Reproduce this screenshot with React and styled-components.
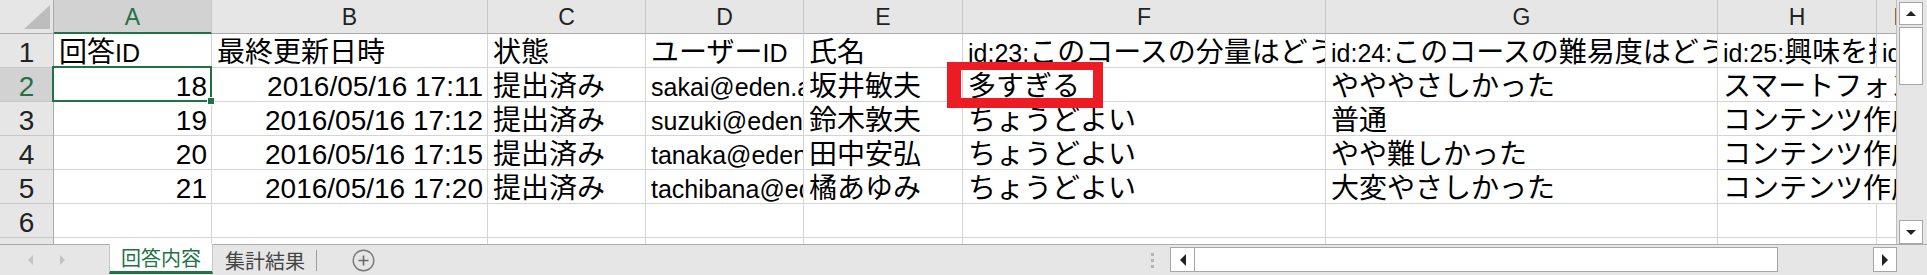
import React from "react";
import styled, { createGlobalStyle, css } from "styled-components";

const GlobalStyle = createGlobalStyle`
  html, body {
    margin: 0;
    padding: 0;
    background: #e6e6e6;
    overflow: hidden;
  }
  body {
    font-family: "Liberation Sans", "Noto Sans CJK JP", sans-serif;
  }
`;

const Window = styled.div`
  width: 1927px;
  height: 275px;
  display: flex;
  flex-direction: column;
  background: #e6e6e6;
`;

const Body = styled.div`
  display: flex;
  height: 244px;
`;

const Sheet = styled.div`
  width: 1897px;
  height: 244px;
  box-sizing: border-box;
  border-right: 1px solid #bcbcbc;
  overflow: hidden;
  background: #fff;
  display: grid;
  grid-template-columns: 54px 158px 276px 158px 158px 159px 363px 392px 159px 40px;
  grid-template-rows: 34px repeat(7, 34px);
  align-content: start;
`;

/* header cells */
const Corner = styled.div`
  position: relative;
  box-sizing: border-box;
  background: #e6e6e6;
  border-right: 1px solid #ababab;
  border-bottom: 1px solid #ababab;

  &::after {
    content: "";
    position: absolute;
    right: 3px;
    bottom: 4px;
    width: 0;
    height: 0;
    border-left: 26px solid transparent;
    border-bottom: 24px solid #bdbdbd;
  }
`;

const ColHead = styled.div`
  box-sizing: border-box;
  padding-top: 3px;
  background: ${(p) => (p.$selected ? "#d2d2d2" : "#e6e6e6")};
  color: ${(p) => (p.$selected ? "#217346" : "#222")};
  border-right: 1px solid #c6c6c6;
  border-bottom: ${(p) => (p.$selected ? "2px solid #217346" : "1px solid #ababab")};
  font-size: 23px;
  line-height: 29px;
  text-align: center;
  overflow: hidden;
`;

const RowHead = styled.div`
  box-sizing: border-box;
  padding-top: 4px;
  background: ${(p) => (p.$selected ? "#d2d2d2" : "#e6e6e6")};
  color: ${(p) => (p.$selected ? "#217346" : "#222")};
  border-right: 1px solid #ababab;
  border-bottom: 1px solid #c6c6c6;
  font-size: 28px;
  line-height: 29px;
  text-align: center;
  overflow: hidden;
`;

/* body cells */
const Cell = styled.div`
  position: relative;
  box-sizing: border-box;
  min-width: 0;
  grid-column: ${(p) => (p.$span ? `span ${p.$span}` : "auto")};
  border-right: 1px solid #d4d4d4;
  border-bottom: 1px solid #d4d4d4;
`;

const CellText = styled.div`
  height: 100%;
  box-sizing: border-box;
  font-size: 28px;
  line-height: 29px;
  color: #000;
  white-space: nowrap;
  overflow: hidden;
  padding: ${(p) => (p.$num ? "4px 4px 0 0" : "4px 0 0 5px")};
  text-align: ${(p) => (p.$num ? "right" : "left")};
`;

/* half-width letters in text cells are drawn smaller, as in the sheet font */
const Latin = styled.span`
  font-size: 25px;
`;

const Selection = styled.div`
  position: absolute;
  top: -2px;
  left: -2px;
  right: -1px;
  bottom: -1px;
  border: 2px solid #217346;
  z-index: 2;

  &::after {
    content: "";
    position: absolute;
    right: -4px;
    bottom: -4px;
    width: 6px;
    height: 6px;
    background: #217346;
    box-shadow: 0 0 0 1px #fff;
  }
`;

const Mark = styled.div`
  position: absolute;
  left: -16px;
  top: -6px;
  width: 156px;
  height: 46px;
  box-sizing: border-box;
  border-style: solid;
  border-color: #ed1c24;
  border-width: 8px 10px 10px 14px;
  z-index: 3;
`;

/* vertical scrollbar */
const VScroll = styled.div`
  width: 30px;
  box-sizing: border-box;
  padding: 2px 4px 0 2px;
  display: flex;
  flex-direction: column;
  gap: 2px;
  background: #e6e6e6;
`;

const ScrollBtn = styled.div`
  flex: none;
  box-sizing: border-box;
  width: ${(p) => p.$w}px;
  height: ${(p) => p.$h}px;
  background: #fff;
  border: 1px solid #a6a6a6;
  display: flex;
  align-items: center;
  justify-content: center;
  ${(p) => p.$push && "margin-top: auto;"}
`;

const Arrow = styled.span`
  width: 0;
  height: 0;
  ${(p) => {
    const c = p.$color || "#222";
    switch (p.$dir) {
      case "up":
        return `border-left: 5px solid transparent; border-right: 5px solid transparent; border-bottom: 5px solid ${c};`;
      case "down":
        return `border-left: 5px solid transparent; border-right: 5px solid transparent; border-top: 5px solid ${c};`;
      case "left":
        return `border-top: ${p.$size || 5}px solid transparent; border-bottom: ${p.$size || 5}px solid transparent; border-right: ${p.$len || 6}px solid ${c};`;
      default:
        return `border-top: ${p.$size || 5}px solid transparent; border-bottom: ${p.$size || 5}px solid transparent; border-left: ${p.$len || 6}px solid ${c};`;
    }
  }}
`;

const VThumb = styled.div`
  flex: none;
  box-sizing: border-box;
  width: 24px;
  height: 58px;
  background: #fff;
  border: 1px solid #a6a6a6;
`;

/* tab bar */
const TabBar = styled.div`
  display: flex;
  align-items: stretch;
  height: 31px;
  box-sizing: border-box;
  border-top: 1px solid #ababab;
  background: #e6e6e6;
`;

const NavArrows = styled.div`
  width: 109px;
  box-sizing: border-box;
  padding-left: 28px;
  display: flex;
  align-items: center;
  gap: 27px;
`;

const Tab = styled.div`
  display: flex;
  align-items: center;
  box-sizing: border-box;
  font-family: "Noto Sans CJK JP", sans-serif;
  font-size: 20px;
  white-space: nowrap;
  ${(p) =>
    p.$active
      ? css`
          margin: -1px 0 1px;
          padding: 0 11px;
          background: #fff;
          color: #217346;
          border-left: 1px solid #c6c6c6;
          border-right: 1px solid #c6c6c6;
          border-bottom: 3px solid #217346;
        `
      : css`
          padding: 0 11px 0 12px;
          color: #444;
        `}
`;

const TabDivider = styled.span`
  align-self: center;
  width: 1px;
  height: 21px;
  background: #9c9c9c;
`;

const AddSheet = styled.div`
  display: flex;
  align-items: center;
  margin-left: 35px;
`;

const Spacer = styled.div`
  flex: 1;
`;

const Grip = styled.div`
  display: flex;
  flex-direction: column;
  justify-content: center;
  gap: 3px;
  margin-right: 16px;

  span {
    width: 3px;
    height: 3px;
    background: #b4b4b4;
  }
`;

const HScroll = styled.div`
  display: flex;
  width: 727px;
  height: 25px;
  margin: 2px 30px 0 0;
`;

const HThumb = styled.div`
  width: 583px;
  box-sizing: border-box;
  background: #fff;
  border: 1px solid #a6a6a6;
  border-left: none;
`;

const cols = [
  { id: "A", selected: true },
  { id: "B" },
  { id: "C" },
  { id: "D" },
  { id: "E" },
  { id: "F" },
  { id: "G" },
  { id: "H" },
  { id: "I" },
];

const rows = [
  [
    { t: "回答ID" },
    { t: "最終更新日時" },
    { t: "状態" },
    { t: "ユーザーID" },
    { t: "氏名" },
    { t: "id:23:このコースの分量はどうでしたか" },
    { t: "id:24:このコースの難易度はどうでしたか" },
    { t: "id:25:興味を持ったテーマはどれですか" },
    { t: "id:26:今後受講したいコース" },
  ],
  [
    { t: "18", num: true, sel: true },
    { t: "2016/05/16 17:11", num: true },
    { t: "提出済み" },
    { t: "sakai@eden.ac.jp" },
    { t: "坂井敏夫" },
    { t: "多すぎる", mark: true },
    { t: "やややさしかった" },
    { t: "スマートフォンアプリ開発", span: 2 },
  ],
  [
    { t: "19", num: true },
    { t: "2016/05/16 17:12", num: true },
    { t: "提出済み" },
    { t: "suzuki@eden.ac.jp" },
    { t: "鈴木敦夫" },
    { t: "ちょうどよい" },
    { t: "普通" },
    { t: "コンテンツ作成ツール", span: 2 },
  ],
  [
    { t: "20", num: true },
    { t: "2016/05/16 17:15", num: true },
    { t: "提出済み" },
    { t: "tanaka@eden.ac.jp" },
    { t: "田中安弘" },
    { t: "ちょうどよい" },
    { t: "やや難しかった" },
    { t: "コンテンツ作成ツール", span: 2 },
  ],
  [
    { t: "21", num: true },
    { t: "2016/05/16 17:20", num: true },
    { t: "提出済み" },
    { t: "tachibana@eden.ac.jp" },
    { t: "橘あゆみ" },
    { t: "ちょうどよい" },
    { t: "大変やさしかった" },
    { t: "コンテンツ作成ツール", span: 2 },
  ],
  Array.from({ length: 9 }, () => ({ t: "" })),
  Array.from({ length: 9 }, () => ({ t: "" })),
];

const ascii = /^[\x20-\x7E]+$/;

const renderText = (t) =>
  t
    .split(/([\x20-\x7E]+)/)
    .filter(Boolean)
    .map((part, i) => (ascii.test(part) ? <Latin key={i}>{part}</Latin> : part));

const PlusIcon = () => (
  <svg width="23" height="23" viewBox="0 0 23 23">
    <circle cx="11.5" cy="11.5" r="10.3" fill="none" stroke="#7a7a7a" strokeWidth="1.4" />
    <path d="M11.5 6.5v10M6.5 11.5h10" stroke="#6a6a6a" strokeWidth="1.6" />
  </svg>
);

const App = () => {
  return (
    <Window>
      <GlobalStyle />
      <Body>
        <Sheet>
          <Corner />
          {cols.map((c) => (
            <ColHead key={c.id} $selected={c.selected}>
              {c.id}
            </ColHead>
          ))}
          {rows.map((row, r) => (
            <React.Fragment key={r}>
              <RowHead $selected={r === 1}>{r + 1}</RowHead>
              {row.map((cell, i) => (
                <Cell key={i} $span={cell.span}>
                  <CellText $num={cell.num}>{cell.num ? cell.t : renderText(cell.t)}</CellText>
                  {cell.sel && <Selection />}
                  {cell.mark && <Mark />}
                </Cell>
              ))}
            </React.Fragment>
          ))}
        </Sheet>
        <VScroll>
          <ScrollBtn $w={24} $h={23}>
            <Arrow $dir="up" />
          </ScrollBtn>
          <VThumb />
          <ScrollBtn $w={24} $h={24} $push>
            <Arrow $dir="down" />
          </ScrollBtn>
        </VScroll>
      </Body>
      <TabBar>
        <NavArrows>
          <Arrow $dir="left" $color="#c3c3c3" $len={5} />
          <Arrow $dir="right" $color="#c3c3c3" $len={5} />
        </NavArrows>
        <Tab $active>回答内容</Tab>
        <Tab>集計結果</Tab>
        <TabDivider />
        <AddSheet>
          <PlusIcon />
        </AddSheet>
        <Spacer />
        <Grip>
          <span />
          <span />
          <span />
        </Grip>
        <HScroll>
          <ScrollBtn $w={25} $h={25}>
            <Arrow $dir="left" $size={6} $len={6} />
          </ScrollBtn>
          <HThumb />
          <Spacer />
          <ScrollBtn $w={24} $h={25}>
            <Arrow $dir="right" $size={6} $len={6} />
          </ScrollBtn>
        </HScroll>
      </TabBar>
    </Window>
  );
};

export default App;
